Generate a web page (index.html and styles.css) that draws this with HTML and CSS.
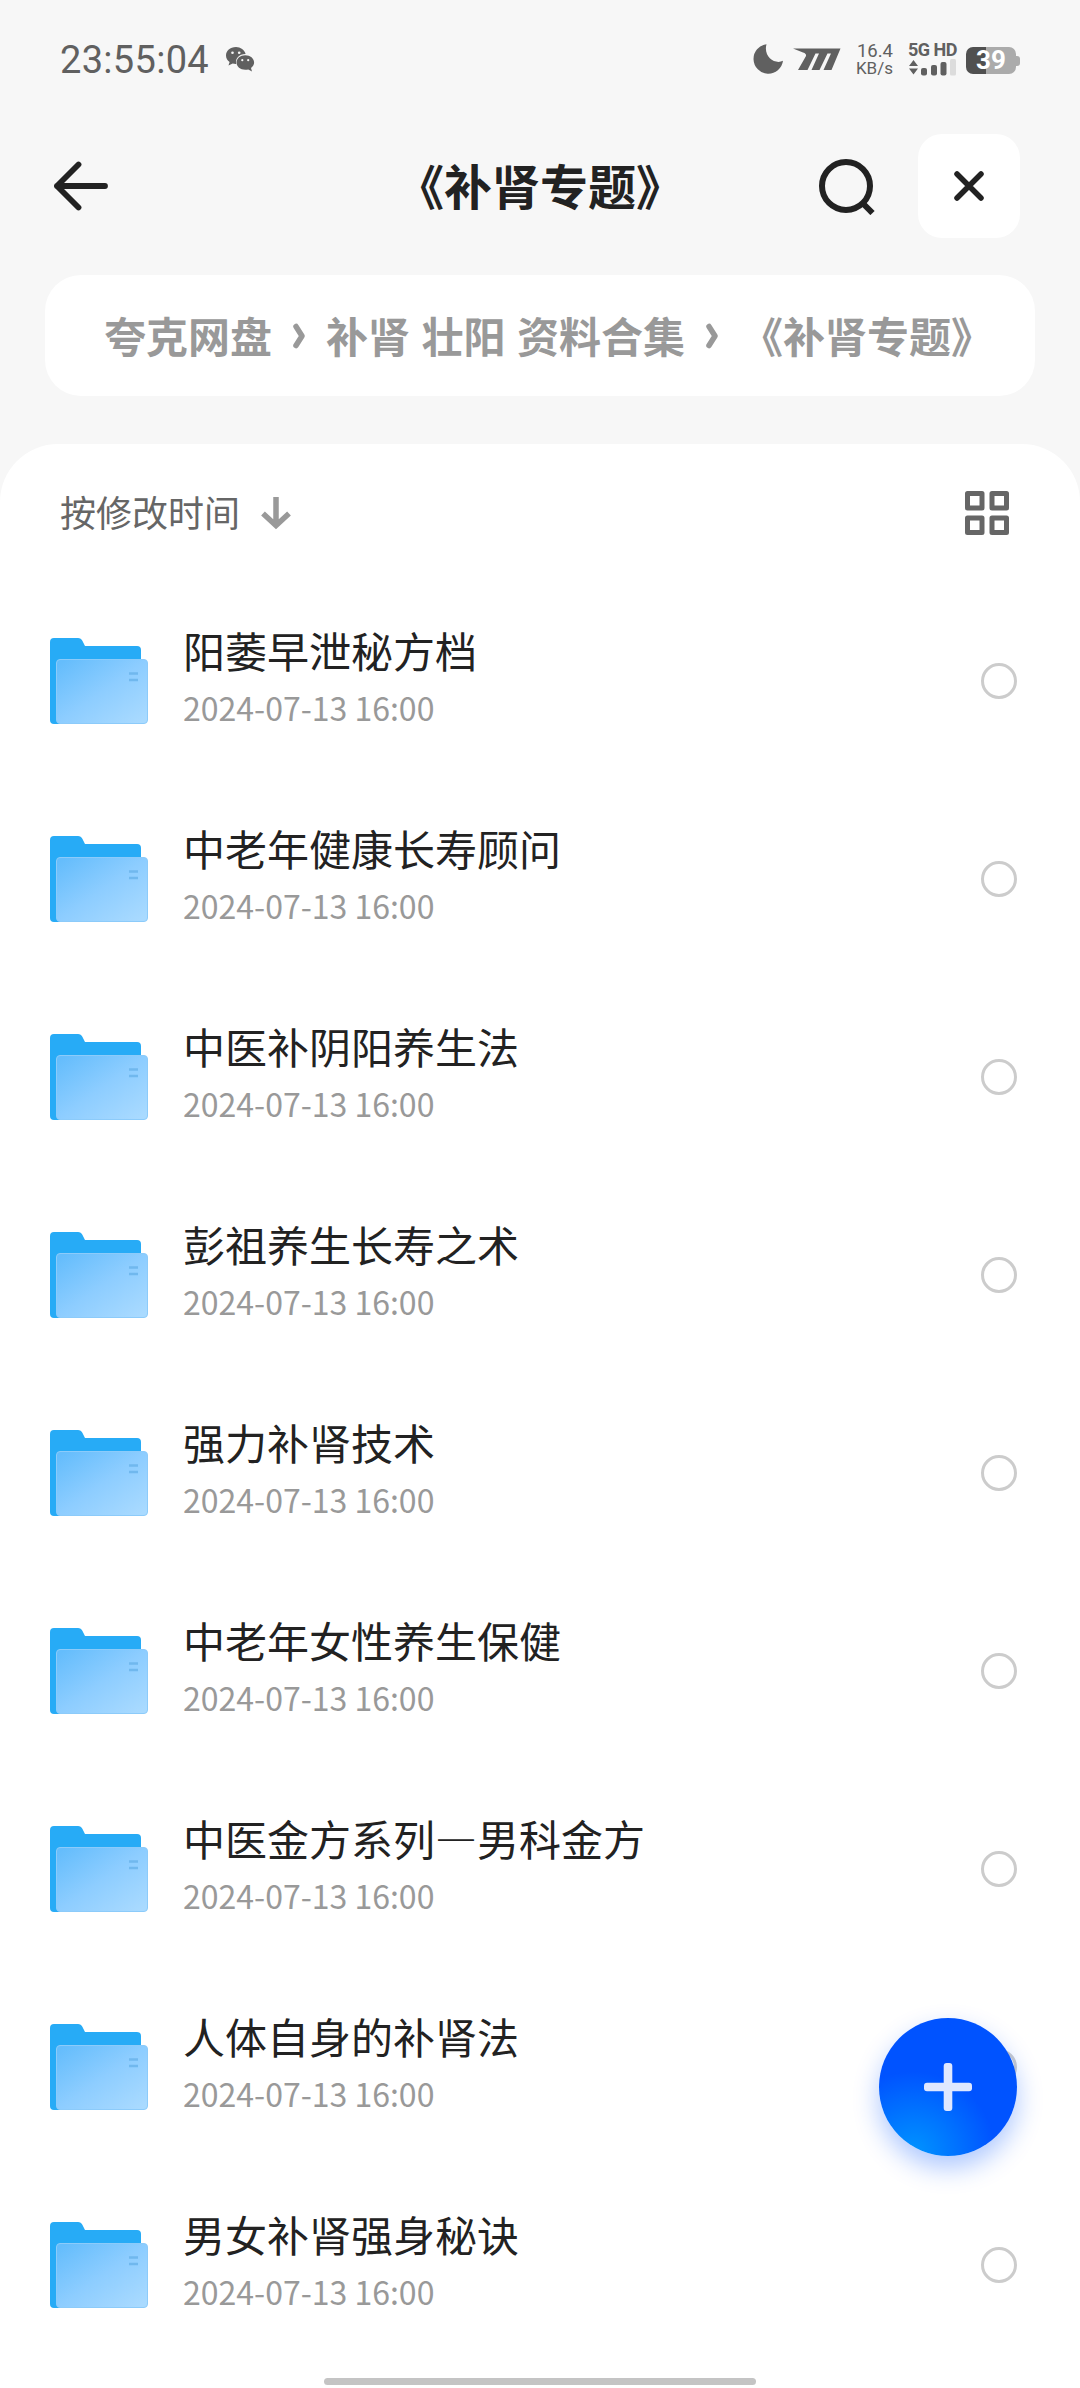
FILE: index.html
```html
<!DOCTYPE html>
<html lang="zh-CN">
<head>
<meta charset="utf-8">
<title>《补肾专题》</title>
<link rel="stylesheet" href="styles.css">
</head>
<body>
<svg class="defs" width="0" height="0" aria-hidden="true">
  <defs>
    <linearGradient id="front" x1="0" y1="0.1" x2="0.9" y2="1">
      <stop offset="0" stop-color="#65bdfc"/>
      <stop offset="0.5" stop-color="#8dcdff"/>
      <stop offset="1" stop-color="#a9daff"/>
    </linearGradient>
    <symbol id="folder" viewBox="0 0 98 86">
      <path fill="#27abf6" d="M4 0H28Q31 0 32.500 3L35 8H87Q91 8 91 12V40H20V86H4Q0 86 0 82V4Q0 0 4 0Z"/>
      <rect x="6.500" y="21.500" width="91" height="64" rx="3.500" fill="url(#front)" stroke="#8ccbfa"/>
      <path stroke="#70b8ee" stroke-width="2.500" d="M79 35.500H88M79 42H88"/>
    </symbol>
  </defs>
</svg>

<header class="top">
  <div class="status">
    <span class="clock">23:55:04</span>
    <svg class="wechat" width="30" height="26" viewBox="0 0 30 26">
      <path fill="#606060" d="M11 1C5 1 1 4.800 1 9.500c0 2.700 1.400 5 3.600 6.500L3.500 19.500 7.700 17.500c1.200.3 2.300.5 3.500.4C10 12.500 14 8 20.600 8 19.600 4 15.500 1 11 1Z"/>
      <path fill="#606060" d="M20.300 9.300c-5 0-8.800 3.200-8.800 7.300s3.800 7.200 8.800 7.200c1 0 2-.2 3-.4L27 25.500 26 22c1.900-1.300 3.100-3.200 3.100-5.400 0-4.100-3.900-7.300-8.800-7.300Z"/>
      <g fill="#f7f7f7"><circle cx="7.500" cy="6.700" r="1.300"/><circle cx="14.200" cy="6.700" r="1.300"/><circle cx="17.300" cy="14.200" r="1.100"/><circle cx="23.200" cy="14.200" r="1.100"/></g>
    </svg>
    <div class="status-right">
      <svg width="30" height="30" viewBox="0 0 30 30"><path fill="#606060" d="M13.500.2A14.800 14.800 0 1 0 30 16.800C22 21 10 12.500 13.500.2Z"/></svg>
      <svg class="mode" width="48" height="23" viewBox="0 0 48 23"><path fill="#606060" d="M0 .5H47.500L38.500 22H30.500L38 5.500H34.500L26.500 22H18.500L26 5.500H22.500L14.500 22H5L13 8Q13.500 5.500 10 4.500Z"/></svg>
      <div class="speed"><span>16.4</span><span>KB/s</span></div>
      <div class="signal">
        <span>5G HD</span>
        <svg width="48" height="17" viewBox="0 0 48 17"><path fill="#606060" d="M1 7 5.500 1 10 7ZM1 9.500 5.500 15.500 10 9.500Z"/><g fill="#606060"><rect x="13" y="9" width="6" height="7.500" rx="2"/><rect x="23" y="6" width="6" height="10.500" rx="2"/><rect x="32.500" y="3" width="6" height="13.500" rx="2"/></g><rect x="42" y="0" width="6" height="16.500" rx="1.500" fill="#dcdcdc"/></svg>
      </div>
      <div class="battery"><span>39</span></div>
    </div>
  </div>

  <nav class="bar">
    <svg width="56" height="50" viewBox="0 0 56 50" fill="none" stroke="#222" stroke-width="5.800" stroke-linecap="round" stroke-linejoin="round"><path d="M25.500 3.500 4 25 25.500 46.500M4 25H52"/></svg>
    <h1>《补肾专题》</h1>
    <div class="actions">
      <svg width="58" height="58" viewBox="0 0 58 58" fill="none" stroke="#222" stroke-width="6"><circle cx="28" cy="29" r="24"/><path d="M43.500 45 54.500 56"/></svg>
      <div class="close"><svg width="32" height="32" viewBox="0 0 32 32" stroke="#222" stroke-width="5.500" stroke-linecap="round"><path d="M4 4 28 28M28 4 4 28"/></svg></div>
    </div>
  </nav>

  <div class="crumbs">
    <span>夸克网盘</span>
    <svg class="sep" width="14" height="26" viewBox="0 0 14 26"><path d="M4 3.500 10 13 4 22.500"/></svg>
    <span>补肾 壮阳 资料合集</span>
    <svg class="sep" width="14" height="26" viewBox="0 0 14 26"><path d="M4 3.500 10 13 4 22.500"/></svg>
    <span class="current">《补肾专题》</span>
  </div>
</header>

<main class="panel">
  <div class="tools">
    <span>按修改时间</span>
    <svg class="sort" width="32" height="34" viewBox="0 0 32 34" fill="none" stroke="#999" stroke-width="5.500"><path d="M16 1V29M3 17.500 16 29.500 29 17.500"/></svg>
    <svg class="grid" width="44" height="44" viewBox="0 0 44 44" fill="none" stroke="#666" stroke-width="5" stroke-linejoin="round"><rect x="2.500" y="2.500" width="14.500" height="14.500"/><rect x="27" y="2.500" width="14.500" height="14.500"/><rect x="2.500" y="27" width="14.500" height="14.500"/><rect x="27" y="27" width="14.500" height="14.500"/></svg>
  </div>
  <ul class="files">
    <li><svg class="folder"><use href="#folder"/></svg><div class="info"><b>阳萎早泄秘方档</b><time>2024-07-13 16:00</time></div><i class="check"></i></li>
    <li><svg class="folder"><use href="#folder"/></svg><div class="info"><b>中老年健康长寿顾问</b><time>2024-07-13 16:00</time></div><i class="check"></i></li>
    <li><svg class="folder"><use href="#folder"/></svg><div class="info"><b>中医补阴阳养生法</b><time>2024-07-13 16:00</time></div><i class="check"></i></li>
    <li><svg class="folder"><use href="#folder"/></svg><div class="info"><b>彭祖养生长寿之术</b><time>2024-07-13 16:00</time></div><i class="check"></i></li>
    <li><svg class="folder"><use href="#folder"/></svg><div class="info"><b>强力补肾技术</b><time>2024-07-13 16:00</time></div><i class="check"></i></li>
    <li><svg class="folder"><use href="#folder"/></svg><div class="info"><b>中老年女性养生保健</b><time>2024-07-13 16:00</time></div><i class="check"></i></li>
    <li><svg class="folder"><use href="#folder"/></svg><div class="info"><b>中医金方系列—男科金方</b><time>2024-07-13 16:00</time></div><i class="check"></i></li>
    <li><svg class="folder"><use href="#folder"/></svg><div class="info"><b>人体自身的补肾法</b><time>2024-07-13 16:00</time></div><i class="check"></i></li>
    <li><svg class="folder"><use href="#folder"/></svg><div class="info"><b>男女补肾强身秘诀</b><time>2024-07-13 16:00</time></div><i class="check"></i></li>
  </ul>
</main>

<div class="fab"><svg width="48" height="48" viewBox="0 0 48 48" fill="#dfe8ff"><rect x="19.700" y="0" width="8.600" height="48" rx="3"/><rect x="0" y="19.700" width="48" height="8.600" rx="3"/></svg></div>
<div class="home"></div>
</body>
</html>
```
FILE: styles.css
```css
* { box-sizing: border-box; }
body {
  margin: 0;
  height: 2388px;
  position: relative;
  overflow: hidden;
  background: #f7f7f7;
  color: #222;
  font-family: "Noto Sans CJK SC", sans-serif;
}
svg { display: block; flex: none; }
.defs { position: absolute; }

.top { height: 444px; }
.status {
  display: flex;
  align-items: center;
  height: 118px;
  padding: 0 60px;
  color: #606060;
  font-family: Roboto, sans-serif;
}
.clock { width: 165px; padding-top: 1px; font-size: 38px; letter-spacing: 0.3px; }
.status-right {
  display: flex;
  align-items: center;
  margin-left: auto;
}
.mode { margin-left: 10px; }
.speed {
  display: flex;
  flex-direction: column;
  align-items: flex-end;
  width: 38px;
  margin-left: 14px;
  padding-top: 2px;
  font-size: 18.500px;
  line-height: 17px;
  white-space: nowrap;
}
.speed span:last-child { font-size: 17px; }
.signal { display: flex; flex-direction: column; gap: 3px; width: 48px; margin-left: 15px; }
.signal span { font-size: 18px; line-height: 13px; font-weight: 700; letter-spacing: -0.5px; white-space: nowrap; }
.battery {
  position: relative;
  width: 50px;
  height: 27px;
  margin: 3px 4px 0 10px;
  border-radius: 7px;
  background: linear-gradient(90deg, #505050 20px, #ababab 20px);
  color: #fff;
  font: 700 26px/27px Roboto, sans-serif;
  text-align: center;
}
.battery::after {
  content: "";
  position: absolute;
  right: -4px;
  top: 9px;
  width: 4px;
  height: 10px;
  border-radius: 0 3px 3px 0;
  background: #ababab;
}

.bar {
  display: grid;
  grid-template-columns: 1fr auto 1fr;
  align-items: center;
  height: 136px;
  padding: 0 60px 0 53px;
}
.bar h1 { margin: 0 0 4px 7px; font-size: 48px; line-height: 68px; font-weight: 700; }
.actions { display: flex; align-items: center; justify-content: flex-end; gap: 42px; }
.close {
  display: grid;
  place-items: center;
  width: 102px;
  height: 104px;
  border-radius: 24px;
  background: #fff;
}

.crumbs {
  display: flex;
  align-items: center;
  height: 121px;
  margin: 21px 45px 0;
  padding: 0 0 0 59px;
  border-radius: 36px;
  background: #fff;
  color: #999;
  font-size: 42px;
  font-weight: 700;
  white-space: nowrap;
  word-spacing: 2px;
}
.crumbs span { margin-bottom: 2px; }
.crumbs .current { margin-left: 2px; }
.sep { margin: 0 20px; fill: none; stroke: #999; stroke-width: 5.500px; stroke-linecap: round; stroke-linejoin: round; }

.panel { height: 1944px; border-radius: 58px 58px 0 0; background: #fff; }
.tools {
  display: flex;
  align-items: center;
  height: 138px;
  padding: 0 71px 0 60px;
  color: #666;
  font-size: 36px;
}
.tools span { margin-bottom: 4px; }
.sort { margin-left: 20px; }
.grid { margin-left: auto; }

.files { margin: 0; padding: 0; list-style: none; }
.files li {
  display: flex;
  align-items: center;
  height: 198px;
  padding: 0 63px 0 50px;
}
.folder { width: 98px; height: 86px; }
.info { margin: 0 0 7px 35px; }
.info b { display: block; font-size: 42px; line-height: 58px; font-weight: 400; }
.info time { display: block; font-size: 32px; line-height: 56px; color: #999; }
.check {
  width: 36px;
  height: 36px;
  margin-left: auto;
  border: 3px solid #ccc;
  border-radius: 50%;
}

.fab {
  position: absolute;
  left: 879px;
  top: 2018px;
  display: grid;
  place-items: center;
  width: 138px;
  height: 138px;
  border-radius: 50%;
  background: radial-gradient(circle at 25% 98%, #0094ff 0, #0074ff 24%, #0053ff 48%);
  box-shadow: 0 12px 26px rgba(0, 83, 255, 0.32);
}
.home {
  position: absolute;
  left: 324px;
  top: 2378px;
  width: 432px;
  height: 7px;
  border-radius: 4px;
  background: #c4c4c4;
}
```
